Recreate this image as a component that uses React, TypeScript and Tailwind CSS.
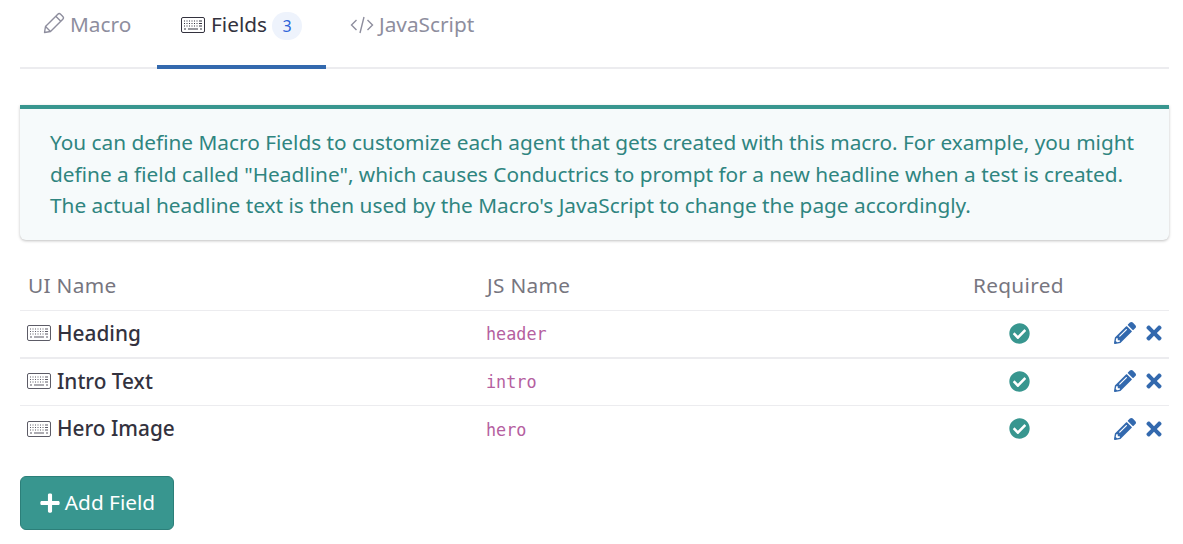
import { FaCheckCircle, FaPencilAlt, FaPlus, FaTimes } from 'react-icons/fa';

const FIELDS = [
  { name: 'Heading', js: 'header', h: 'h-[48px]', border: 'border-b-2' },
  { name: 'Intro Text', js: 'intro', h: 'h-[47px]', border: 'border-b' },
  { name: 'Hero Image', js: 'hero', h: 'h-[47px]', border: '' },
];

function KeyboardIcon({ className }: { className?: string }) {
  return (
    <svg viewBox="0 0 24 16" className={className} fill="none" stroke="currentColor">
      <rect x="0.5" y="0.5" width="23" height="15" rx="1.5" strokeWidth="1" />
      <path d="M3 4h1M5.5 4h1M8 4h1M10.500 4h1M13 4h1M15.500 4h1M18 4h3M3 6.500h1M5.500 6.500h1M8 6.500h1M10.500 6.500h1M13 6.500h1M15.500 6.500h1M18 6.500h3M3 9h1M5.500 9h1M8 9h1M10.500 9h1M13 9h1M15.500 9h1M18 9h3M3 12h2M7 12h10M19 12h2" strokeWidth="1.100" />
    </svg>
  );
}

function PencilLight({ className }: { className?: string }) {
  return (
    <svg viewBox="0 0 22 22" className={className} fill="none" stroke="currentColor" strokeWidth="1.400" strokeLinejoin="round">
      <path d="M2.500 14.500 14.800 2.200a2 2 0 0 1 2.800 0l2.200 2.200a2 2 0 0 1 0 2.800L7.500 19.500 1.500 20.500z" />
      <path d="m12.800 4.200 5 5M2.500 14.500l5 5" />
    </svg>
  );
}

function CodeLight({ className }: { className?: string }) {
  return (
    <svg viewBox="0 0 24 18" className={className} fill="none" stroke="currentColor" strokeWidth="1.400">
      <path d="M6.500 4 1.500 9l5 5M17.500 4l5 5-5 5M14 1 10 17" />
    </svg>
  );
}

export default function App() {
  return (
    <div className="w-[1183px] h-[544px] overflow-hidden bg-white pl-5 pr-[14px] font-['Noto_Sans',sans-serif] text-[#33323e]">
      <div className="flex h-[69px] border-b-2 border-[#ececef] text-[20.800px]">
        <div className="flex h-[69px] w-[137px] pl-[23px] pt-[7px] gap-[5px] text-[#8e8e9e]">
          <PencilLight className="w-[22px] h-[22px] mt-[5px]" />
          <span className="leading-[34px]">Macro</span>
        </div>
        <div className="flex h-[69px] w-[169px] pl-[24px] pt-[7px] border-b-[4px] border-[#3369ae]">
          <KeyboardIcon className="w-[24px] h-[16px] mt-[10px] mr-[6px]" />
          <span className="leading-[34px]">Fields</span>
          <span className="ml-[5px] mt-[5px] flex h-[28px] w-[30px] items-center justify-center rounded-full bg-[#eef3fc] text-[16px] text-[#2b63d9]">3</span>
        </div>
        <div className="flex h-[69px] pl-[24px] pt-[7px] gap-[5px] text-[#8e8e9e]">
          <CodeLight className="w-[24px] h-[18px] mt-[9px]" />
          <span className="leading-[34px]">JavaScript</span>
        </div>
      </div>

      <div className="mt-[36px] h-[135px] rounded-b-[6px] border-t-[4px] border-[#38968f] bg-[#f6fafb] px-[30px] pt-[18px] text-[20.800px] leading-[31.500px] text-[#2f8580] shadow-[0_1px_3px_rgba(0,0,0,0.25)]">
        You can define Macro Fields to customize each agent that gets created with this macro. For example, you might
        define a field called "Headline", which causes Conductrics to prompt for a new headline when a test is created.
        The actual headline text is then used by the Macro's JavaScript to change the page accordingly.
      </div>

      <div className="mt-[23px] flex h-[48px] items-center border-b border-[#ececef] pb-[1px] text-[20.800px] tracking-[0.3px] text-[#77767f]">
        <div className="w-[459px] pl-[8px]">UI Name</div>
        <div className="w-[487px] pl-[8px]">JS Name</div>
        <div className="pl-[7px]">Required</div>
      </div>

      {FIELDS.map((f) => (
        <div key={f.name} className={`flex items-center border-[#ececef] pb-[2px] ${f.h} ${f.border}`}>
          <div className="flex w-[459px] items-center pl-[7px] text-[20.800px] font-medium">
            <KeyboardIcon className="w-[24px] h-[16px] mr-[6px] text-[#5c5b66]" />
            <span className="pt-[1px]">{f.name}</span>
          </div>
          <div className="w-[487px] pl-[7px] pt-[4px] font-['DejaVu_Sans_Mono',monospace] text-[16.800px] text-[#b5609f]">{f.js}</div>
          <div className="flex w-[106px] justify-center">
            <FaCheckCircle className="text-[21px] text-[#38968f]" />
          </div>
          <div className="flex flex-1 items-center justify-end gap-[7px] pr-[4px] text-[#3369ae]">
            <FaPencilAlt className="text-[22px]" />
            <FaTimes className="text-[22px]" />
          </div>
        </div>
      ))}

      <button className="mt-[23px] flex h-[54px] w-[154px] items-center justify-center gap-[4px] rounded-[6px] border border-[#2c7f79] bg-[#38968f] text-[20.800px] text-white">
        <FaPlus className="text-[22px]" />
        Add Field
      </button>
    </div>
  );
}
